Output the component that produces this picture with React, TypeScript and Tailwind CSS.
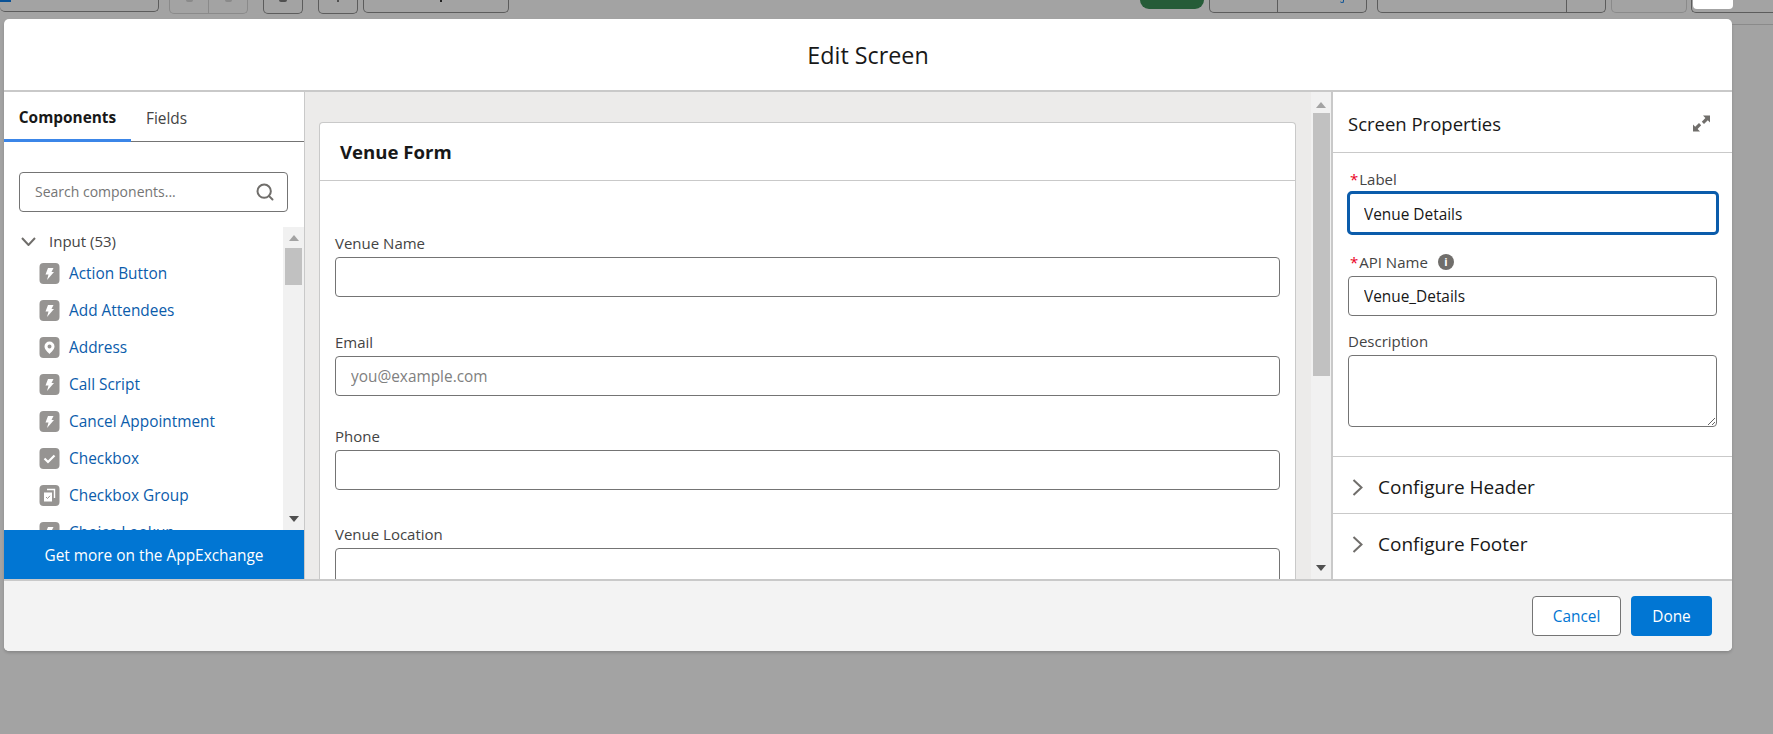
import { Search } from 'lucide-react';

const FONT = "font-['Open_Sans',sans-serif]";

type IconKind = 'bolt' | 'pin' | 'check' | 'group';

const COMPONENTS: { name: string; icon: IconKind }[] = [
  { name: 'Action Button', icon: 'bolt' },
  { name: 'Add Attendees', icon: 'bolt' },
  { name: 'Address', icon: 'pin' },
  { name: 'Call Script', icon: 'bolt' },
  { name: 'Cancel Appointment', icon: 'bolt' },
  { name: 'Checkbox', icon: 'check' },
  { name: 'Checkbox Group', icon: 'group' },
  { name: 'Choice Lookup', icon: 'bolt' },
];

function ComponentIcon({ kind }: { kind: IconKind }) {
  return (
    <svg width="21" height="21" viewBox="0 0 21 21" className="shrink-0">
      <rect x="0.5" y="0" width="20" height="21" rx="4" fill="#969492" />
      {kind === 'bolt' && <path d="M9 5 H14.5 L12.5 9 H15 L8 17 L9.5 11.500 H6.500 Z" fill="#fff" />}
      {kind === 'pin' && (
        <path
          fillRule="evenodd"
          d="M10.5 4.5 a5 5 0 0 1 5 5 c0 3 -3.5 6 -5 7.5 c-1.500 -1.500 -5 -4.500 -5 -7.500 a5 5 0 0 1 5 -5 Z M10.500 7.500 a2 2 0 1 0 0 4 a2 2 0 0 0 0 -4 Z"
          fill="#fff"
        />
      )}
      {kind === 'check' && <path d="M5.5 10.500 L9 14 L15.500 7.500" fill="none" stroke="#fff" strokeWidth="2.200" />}
      {kind === 'group' && (
        <g>
          <path d="M8 4.500 H15.500 V13" fill="none" stroke="#fff" strokeWidth="1.400" />
          <rect x="5" y="7.500" width="8" height="9" fill="#fff" />
          <path d="M7 12 L8.500 13.500 L11 10.800" fill="none" stroke="#969492" strokeWidth="1" />
        </g>
      )}
    </svg>
  );
}

function ScrollArrow({ up, dim }: { up?: boolean; dim?: boolean }) {
  return (
    <svg width="10" height="6" viewBox="0 0 10 6">
      <path d={up ? 'M5 0 L10 6 H0 Z' : 'M0 0 H10 L5 6 Z'} fill={dim ? '#a3a3a3' : '#505050'} />
    </svg>
  );
}

function FormField({ label, placeholder, topGap }: { label: string; placeholder?: string; topGap: string }) {
  return (
    <div className={topGap}>
      <div className="text-[15px] leading-[18px] text-[#444444]">{label}</div>
      <input
        readOnly
        placeholder={placeholder}
        className="mt-[5px] block h-[40px] w-full rounded-[4px] border border-[#747474] bg-white px-[15px] text-[15.4px] text-[#181818] outline-none placeholder:text-[#808080]"
      />
    </div>
  );
}

function Toolbar() {
  return (
    <div className="relative flex h-[19px] items-start overflow-hidden">
      <div className="relative h-[12px] w-[159px] rounded-b-[5px] border-r border-b border-[#5c5c5c]">
        <div className="absolute top-0 left-0 h-[2px] w-[11px] bg-[#0a5296]" />
      </div>
      <div className="ml-[10px] flex h-[14px] w-[79px] rounded-b-[5px] border border-t-0 border-[#8a8a8a]">
        <div className="flex w-[39px] justify-center border-r border-[#8a8a8a]">
          <div className="h-[2px] w-[7px] rounded-b bg-[#8a8a8a]" />
        </div>
        <div className="flex flex-1 justify-center">
          <div className="h-[2px] w-[7px] rounded-b bg-[#8a8a8a]" />
        </div>
      </div>
      <div className="ml-[15px] flex h-[14px] w-[40px] justify-center rounded-b-[5px] border border-t-0 border-[#5c5c5c]">
        <div className="h-[2px] w-[8px] rounded-b bg-[#505050]" />
      </div>
      <div className="ml-[15px] flex h-[14px] w-[40px] justify-center rounded-b-[5px] border border-t-0 border-[#5c5c5c]">
        <div className="h-[2px] w-[2px] bg-[#505050]" />
      </div>
      <div className="ml-[5px] flex h-[13px] w-[146px] justify-center rounded-b-[5px] border border-t-0 border-[#5c5c5c]">
        <div className="ml-[10px] h-[2px] w-[2px] bg-[#222222]" />
      </div>
      <div className="ml-[631px] h-[9px] w-[64px] rounded-b-[11px] bg-[#265c38]" />
      <div className="ml-[5px] flex h-[13px] w-[158px] rounded-b-[5px] border border-t-0 border-[#5c5c5c]">
        <div className="w-[68px] border-r border-[#5c5c5c]" />
        <div className="flex flex-1 justify-end pr-[22px]">
          <div className="h-[3px] w-[4px] rounded-b-full border-r border-b border-[#0a5296]" />
        </div>
      </div>
      <div className="ml-[10px] flex h-[13px] w-[229px] justify-end rounded-b-[5px] border border-t-0 border-[#5c5c5c]">
        <div className="w-[39px] border-l border-[#5c5c5c]" />
      </div>
      <div className="ml-[5px] h-[13px] w-[76px] rounded-b-[5px] border border-t-0 border-[#8a8a8a]" />
      <div className="ml-[4px] h-[13px] flex-1 rounded-bl-[5px] border-b border-l border-[#5c5c5c] pl-px">
        <div className="h-[9px] w-[40px] rounded-b-[4px] bg-white" />
      </div>
    </div>
  );
}

function ComponentsPanel() {
  return (
    <aside className="flex w-[301px] shrink-0 flex-col border-r border-[#c9c9c9]">
      <div className="flex h-[50px] shrink-0 border-b border-[#747474]">
        <div className="-mb-px flex w-[127px] items-center justify-center border-b-[3px] border-[#3b86e8] pt-[5px] text-[15.4px] font-bold text-[#181818]">
          Components
        </div>
        <div className="flex items-center pt-[4px] pl-[15px] text-[15.4px] text-[#444444]">Fields</div>
      </div>
      <div className="mt-[30px] ml-[15px] flex h-[40px] w-[269px] shrink-0 items-center justify-between rounded-[4px] border border-[#747474] pr-[12px] pl-[15px]">
        <span className="-mt-[1px] text-[14px] text-[#757575]">Search components...</span>
        <Search size={20} strokeWidth={2.400} className="text-[#706e6b]" />
      </div>
      <div className="mt-[15px] flex min-h-0 flex-1">
        <div className="min-w-0 flex-1 overflow-hidden">
          <div className="ml-[17px] flex h-[28px] items-center">
            <svg width="15" height="9" viewBox="0 0 15 9" className="shrink-0">
              <path d="M1 1 L7.500 8 L14 1" fill="none" stroke="#706e6b" strokeWidth="2" />
            </svg>
            <span className="ml-[13px] text-[15px] text-[#444444]">Input (53)</span>
          </div>
          {COMPONENTS.map((c) => (
            <div key={c.name} className="ml-[35px] flex h-[37px] items-center gap-[9px]">
              <ComponentIcon kind={c.icon} />
              <span className="text-[15.4px] whitespace-nowrap text-[#0b5cab]">{c.name}</span>
            </div>
          ))}
        </div>
        <div className="flex w-[21px] shrink-0 flex-col items-center bg-[#f1f1f1] pt-[8px] pb-[8px]">
          <ScrollArrow up dim />
          <div className="mt-[7px] h-[37px] w-[17px] bg-[#c1c1c1]" />
          <div className="flex-1" />
          <ScrollArrow />
        </div>
      </div>
      <div className="flex h-[49px] shrink-0 items-center justify-center bg-[#0176d3] pt-[2px] text-[15.4px] text-white">
        Get more on the AppExchange
      </div>
    </aside>
  );
}

function Canvas() {
  return (
    <div className="flex min-w-0 flex-1">
      <div className="min-w-0 flex-1 overflow-hidden bg-[#ecebea] pt-[30px] pr-[15px] pl-[14px]">
        <div className="h-full rounded-t-[4px] border border-b-0 border-[#c9c9c9] bg-white">
          <div className="flex h-[58px] items-center border-b border-[#c9c9c9] pl-[20px] text-[18.6px] font-bold text-[#181818]">
            Venue Form
          </div>
          <div className="px-[15px]">
            <FormField label="Venue Name" topGap="mt-[53px]" />
            <FormField label="Email" placeholder="you@example.com" topGap="mt-[36px]" />
            <FormField label="Phone" topGap="mt-[31px]" />
            <FormField label="Venue Location" topGap="mt-[35px]" />
          </div>
        </div>
      </div>
      <div className="flex w-[22px] shrink-0 flex-col items-center border-r-2 border-[#c9c9c9] bg-[#f1f1f1] pt-[10px] pb-[8px]">
        <ScrollArrow up dim />
        <div className="mt-[5px] h-[263px] w-[17px] bg-[#c1c1c1]" />
        <div className="flex-1" />
        <ScrollArrow />
      </div>
    </div>
  );
}

function CollapsedSection({ title, height }: { title: string; height: string }) {
  return (
    <div className={`flex shrink-0 items-center border-t border-[#c9c9c9] pt-[3px] pl-[19px] ${height}`}>
      <svg width="11" height="17" viewBox="0 0 11 17" className="shrink-0">
        <path d="M1.500 1 L9.500 8.500 L1.500 16" fill="none" stroke="#706e6b" strokeWidth="2" />
      </svg>
      <span className="ml-[15px] text-[19px] text-[#181818]">{title}</span>
    </div>
  );
}

function PropertiesPanel() {
  return (
    <aside className="flex w-[399px] shrink-0 flex-col overflow-hidden">
      <div className="flex h-[61px] shrink-0 items-center justify-between border-b border-[#c9c9c9] pr-[22px] pl-[15px]">
        <span className="pt-[3px] text-[18.5px] text-[#181818]">Screen Properties</span>
        <svg width="17" height="17" viewBox="0 0 17 17" className="mt-[3px]" fill="#706e6b">
          <path d="M10 0.500 H17 V7.500 L14.800 5.300 L11 9 L8.800 6.700 L12.400 2.900 Z" />
          <path d="M0 9.500 L2.200 11.700 L6 8 L8.200 10.300 L4.600 14.100 L7 16.500 H0 Z" />
        </svg>
      </div>
      <div className="px-[15px]">
        <div className="mt-[17px] text-[15px] leading-[18px] text-[#444444]">
          <span className="mr-[1px] ml-[2px] text-[#ea001e]">*</span>Label
        </div>
        <input
          readOnly
          value="Venue Details"
          className="mt-[3px] -ml-px block h-[44px] w-[372px] rounded-[5px] border-[3px] border-[#0b5cab] bg-white pt-[2px] pl-[14px] text-[15.4px] text-[#181818] outline-none"
        />
        <div className="mt-[18px] flex items-center text-[15px] leading-[18px] text-[#444444]">
          <span className="mr-[1px] ml-[2px] text-[#ea001e]">*</span>API Name
          <span className="ml-[10px] flex h-[16px] w-[16px] items-center justify-center rounded-full bg-[#706e6b] text-[11px] font-bold text-white">
            i
          </span>
        </div>
        <input
          readOnly
          value="Venue_Details"
          className="mt-[5px] block h-[40px] w-[369px] rounded-[4px] border border-[#747474] bg-white pl-[15px] text-[15.4px] text-[#181818] outline-none"
        />
        <div className="mt-[16px] text-[15px] leading-[18px] text-[#444444]">Description</div>
        <textarea
          readOnly
          className="mt-[5px] block h-[72px] w-[369px] rounded-[4px] border border-[#747474] bg-white outline-none"
        />
      </div>
      <div className="mt-[29px]">
        <CollapsedSection title="Configure Header" height="h-[57px] pt-[5px]" />
        <CollapsedSection title="Configure Footer" height="h-[58px]" />
      </div>
    </aside>
  );
}

export default function App() {
  return (
    <div className={`h-[734px] w-[1773px] overflow-hidden bg-[#a3a3a3] ${FONT}`}>
      <Toolbar />
      <div className="relative">
        <div className="absolute top-[5px] right-0 left-[1732px] h-px bg-[#8a8a8a]" />
      </div>
      <div className="ml-[4px] flex h-[632px] w-[1728px] flex-col overflow-hidden rounded-[5px] bg-white shadow-[0_2px_3px_rgba(0,0,0,0.16)]">
        <header className="flex h-[73px] shrink-0 items-center justify-center border-b-2 border-[#c9c9c9] pt-[2px] text-[23.3px] text-[#181818]">
          Edit Screen
        </header>
        <div className="flex min-h-0 flex-1">
          <ComponentsPanel />
          <Canvas />
          <PropertiesPanel />
        </div>
        <footer className="flex h-[72px] shrink-0 items-start justify-end gap-[10px] border-t-2 border-[#c9c9c9] bg-[#f3f3f3] pt-[15px] pr-[20px]">
          <button className="h-[40px] w-[89px] rounded-[4px] border border-[#747474] bg-white pt-[2px] text-[15.4px] text-[#0176d3]">
            Cancel
          </button>
          <button className="h-[40px] w-[81px] rounded-[4px] bg-[#0176d3] pt-[2px] text-[15.4px] text-white">Done</button>
        </footer>
      </div>
    </div>
  );
}
